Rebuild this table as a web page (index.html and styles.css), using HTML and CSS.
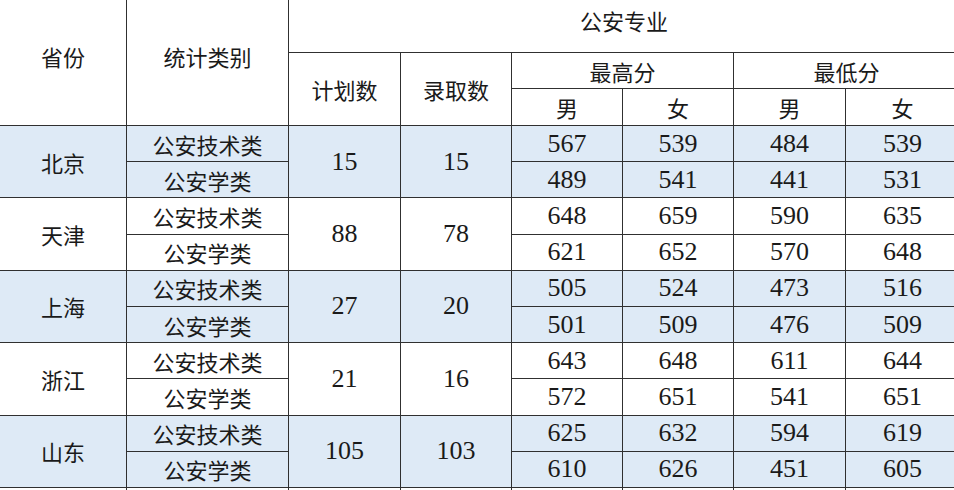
FILE: index.html
```html
<!DOCTYPE html>
<html lang="zh-CN">
<head>
<meta charset="utf-8">
<title>公安专业</title>
<link rel="stylesheet" href="styles.css">
</head>
<body>
<div class="frame">
<table class="scores">
<colgroup>
<col class="c-prov"><col class="c-type"><col class="c-num"><col class="c-num2"><col class="c-num2"><col class="c-num2"><col class="c-num"><col class="c-last">
</colgroup>
<thead>
<tr class="h1">
<th rowspan="3" class="h-side">省份</th>
<th rowspan="3" class="h-side">统计类别</th>
<th colspan="6">公安专业</th>
</tr>
<tr class="h2">
<th rowspan="2" class="h-plan">计划数</th>
<th rowspan="2" class="h-plan">录取数</th>
<th colspan="2">最高分</th>
<th colspan="2">最低分</th>
</tr>
<tr class="h3">
<th>男</th><th>女</th><th>男</th><th>女</th>
</tr>
</thead>
<tbody class="blue">
<tr class="r"><td rowspan="2">北京</td><td>公安技术类</td><td rowspan="2" class="n">15</td><td rowspan="2" class="n">15</td><td class="n">567</td><td class="n">539</td><td class="n">484</td><td class="n">539</td></tr>
<tr class="r"><td>公安学类</td><td class="n">489</td><td class="n">541</td><td class="n">441</td><td class="n">531</td></tr>
</tbody>
<tbody class="white">
<tr class="r"><td rowspan="2">天津</td><td>公安技术类</td><td rowspan="2" class="n">88</td><td rowspan="2" class="n">78</td><td class="n">648</td><td class="n">659</td><td class="n">590</td><td class="n">635</td></tr>
<tr class="r"><td>公安学类</td><td class="n">621</td><td class="n">652</td><td class="n">570</td><td class="n">648</td></tr>
</tbody>
<tbody class="blue">
<tr class="r"><td rowspan="2">上海</td><td>公安技术类</td><td rowspan="2" class="n">27</td><td rowspan="2" class="n">20</td><td class="n">505</td><td class="n">524</td><td class="n">473</td><td class="n">516</td></tr>
<tr class="r"><td>公安学类</td><td class="n">501</td><td class="n">509</td><td class="n">476</td><td class="n">509</td></tr>
</tbody>
<tbody class="white">
<tr class="r"><td rowspan="2">浙江</td><td>公安技术类</td><td rowspan="2" class="n">21</td><td rowspan="2" class="n">16</td><td class="n">643</td><td class="n">648</td><td class="n">611</td><td class="n">644</td></tr>
<tr class="r"><td>公安学类</td><td class="n">572</td><td class="n">651</td><td class="n">541</td><td class="n">651</td></tr>
</tbody>
<tbody class="blue">
<tr class="r"><td rowspan="2">山东</td><td>公安技术类</td><td rowspan="2" class="n">105</td><td rowspan="2" class="n">103</td><td class="n">625</td><td class="n">632</td><td class="n">594</td><td class="n">619</td></tr>
<tr class="r"><td>公安学类</td><td class="n">610</td><td class="n">626</td><td class="n">451</td><td class="n">605</td></tr>
</tbody>
<tbody class="white">
<tr class="r"><td>&nbsp;</td><td>&nbsp;</td><td>&nbsp;</td><td>&nbsp;</td><td>&nbsp;</td><td>&nbsp;</td><td>&nbsp;</td><td>&nbsp;</td></tr>
</tbody>
</table>
</div>
</body>
</html>
```
FILE: styles.css
```css
html, body {
  margin: 0;
  padding: 0;
  background: #ffffff;
}
.frame {
  width: 954px;
  height: 490px;
  overflow: hidden;
}
.scores {
  border-collapse: collapse;
  table-layout: fixed;
  width: 960px;
  margin-top: -14px;
  margin-left: -1px;
  font-family: "Liberation Serif", "Noto Sans CJK SC", serif;
  color: #1a1a1a;
}
.c-prov { width: 127px; }
.c-type { width: 162px; }
.c-num { width: 112px; }
.c-num2 { width: 111px; }
.c-last { width: 114px; }
.scores th,
.scores td {
  border: 1px solid #303030;
  padding: 0;
  text-align: center;
  vertical-align: middle;
  font-weight: normal;
  font-size: 22px;
  font-family: "Noto Sans CJK SC", "Liberation Serif", sans-serif;
  line-height: 1;
  white-space: nowrap;
  overflow: hidden;
}
.scores td.n {
  font-family: "Liberation Serif", serif;
  font-size: 26px;
}
.h1 { height: 66px; }
.h-side { padding-bottom: 6px; }
.h2 { height: 36px; }
.h3 { height: 37px; }
.h-plan { padding-top: 6px; }
.r { height: 36.2px; }
.blue td { background: #deeaf6; }
.white td { background: #ffffff; }
```
